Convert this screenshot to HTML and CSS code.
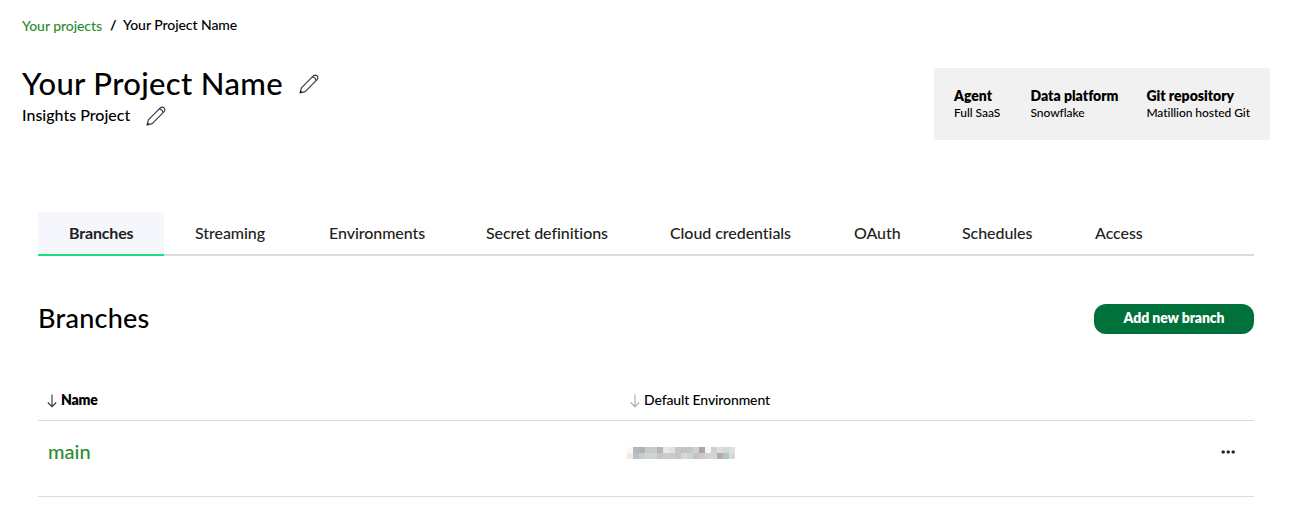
FILE: index.html
```
<!DOCTYPE html>
<html lang="en">
<head>
<meta charset="utf-8">
<title>Your Project Name</title>
<link rel="stylesheet" href="styles.css">
</head>
<body>
<svg class="defs" width="0" height="0" aria-hidden="true">
  <symbol id="pencil" viewBox="0 0 20 20"><path d="M1 19 2.4 13.8 14.3 1.9Q16.2.3 18.1 1.9 19.6 3.8 18.1 5.7L6.2 17.6Z M13.2 3 Q16.6 3.2 17 6.8" fill="none" stroke="#333" stroke-width="1.1" stroke-linejoin="round"/><path d="M1 19l.8-2.6 1.8 1.8z" fill="#222"/></symbol>
  <symbol id="arrow" viewBox="0 0 10 14"><path d="M5 .5V12.7M.8 8.5 5 12.7 9.2 8.5" fill="none" stroke="currentColor" stroke-width="1.1"/></symbol>
</svg>
<nav class="crumbs"><a class="crumb-link" href="#">Your projects</a><span class="slash">/</span><span class="crumb-current">Your Project Name</span></nav>
<header class="header">
  <div>
    <div class="title-row"><h1 class="title">Your Project Name</h1><svg class="pencil"><use href="#pencil"/></svg></div>
    <div class="sub-row"><span class="subtitle">Insights Project</span><svg class="pencil"><use href="#pencil"/></svg></div>
  </div>
  <dl class="info">
    <div class="info-agent"><dt>Agent</dt><dd>Full SaaS</dd></div>
    <div class="info-platform"><dt>Data platform</dt><dd>Snowflake</dd></div>
    <div class="info-git"><dt>Git repository</dt><dd>Matillion hosted Git</dd></div>
  </dl>
</header>
<main class="content">
  <nav class="tabs">
    <a class="tab active">Branches</a><a class="tab">Streaming</a><a class="tab">Environments</a><a class="tab">Secret definitions</a><a class="tab">Cloud credentials</a><a class="tab">OAuth</a><a class="tab">Schedules</a><a class="tab">Access</a>
  </nav>
  <div class="section-head"><h2 class="section-title">Branches</h2><button class="add">Add new branch</button></div>
  <div class="row row-head">
    <div class="cell"><svg class="arrow"><use href="#arrow"/></svg><span class="col-name">Name</span></div>
    <div class="cell"><svg class="arrow muted"><use href="#arrow"/></svg><span class="col-env">Default Environment</span></div>
  </div>
  <div class="row row-body">
    <a class="branch" href="#">main</a>
    <svg class="redacted" viewBox="0 0 18 2" shape-rendering="crispEdges">
      <path fill="#fdf8f2" d="M0 0h1v1H0z"/><path fill="#aeb8c1" d="M1 0h1v1H1z"/><path fill="#b6b1b1" d="M2 0h1v1H2z"/><path fill="#c3cac9" d="M3 0h1v1H3z"/><path fill="#c5ccc6" d="M4 0h1v1H4z"/><path fill="#beb4ab" d="M5 0h1v1H5z"/><path fill="#e6eaee" d="M6 0h1v1H6z"/><path fill="#e5dfda" d="M7 0h1v1H7z"/><path fill="#c2c8c8" d="M8 0h1v1H8z"/><path fill="#bfc4c9" d="M9 0h1v1H9z"/><path fill="#c1c6c6" d="M10 0h1v1h-1z"/><path fill="#ccd4cf" d="M11 0h1v1h-1z"/><path fill="#aaa5a2" d="M12 0h1v1h-1z"/><path fill="#f6f7f8" d="M13 0h1v1h-1z"/><path fill="#cad2d4" d="M14 0h1v1h-1z"/><path fill="#e3deda" d="M15 0h1v1h-1z"/><path fill="#d2dad9" d="M16 0h1v1h-1z"/><path fill="#dde0e0" d="M17 0h1v1h-1z"/>
      <path fill="#f1ebe5" d="M0 1h1v1H0z"/><path fill="#bfbfc3" d="M1 1h1v1H1z"/><path fill="#c3ccd1" d="M2 1h1v1H2z"/><path fill="#cfd5d5" d="M3 1h1v1H3z"/><path fill="#d0d3cc" d="M4 1h1v1H4z"/><path fill="#c5c5c5" d="M5 1h1v1H5z"/><path fill="#cbcbcb" d="M6 1h2v1H6z"/><path fill="#c5c5c5" d="M8 1h1v1H8z"/><path fill="#d5d9dd" d="M9 1h1v1H9z"/><path fill="#ccd3d4" d="M10 1h1v1h-1z"/><path fill="#c4c5b8" d="M11 1h1v1h-1z"/><path fill="#cacacb" d="M12 1h1v1h-1z"/><path fill="#d0d4d6" d="M13 1h1v1h-1z"/><path fill="#d2d5d7" d="M14 1h1v1h-1z"/><path fill="#b5ada2" d="M15 1h1v1h-1z"/><path fill="#b9c2c5" d="M16 1h1v1h-1z"/><path fill="#d5dad9" d="M17 1h1v1h-1z"/>
    </svg>
    <svg class="more" viewBox="0 0 14 4"><rect x=".6" y=".4" width="3.2" height="3.2" rx="1"/><rect x="5.6" y=".4" width="3.2" height="3.2" rx="1"/><rect x="10.6" y=".4" width="3.2" height="3.2" rx="1"/></svg>
  </div>
</main>
</body>
</html>
```
FILE: styles.css
```
* { box-sizing: border-box; }
body { margin: 0; height: 510px; overflow: hidden; background: #fff; color: #000; font-family: Lato, "Liberation Sans", sans-serif; font-weight: 500; font-variant-ligatures: none; }
h1, h2, dl, dd { margin: 0; font-weight: 500; }
a { text-decoration: none; }
.defs { display: none; }
.crumbs { display: flex; height: 68px; padding: 15px 0 0 22px; font-size: 14px; line-height: 20px; letter-spacing: -0.06px; white-space: nowrap; }
.crumb-link { width: 88px; padding-top: 1px; color: #2c8c2c; }
.slash { width: 13px; font-weight: 700; }
.header { display: flex; justify-content: space-between; height: 144px; padding: 0 36px 0 22px; white-space: nowrap; }
.title-row { display: flex; height: 34px; }
.title { width: 277px; font-size: 31px; line-height: 30px; letter-spacing: 0.34px; }
.pencil { width: 20px; height: 20px; margin-top: 6px; }
.sub-row { display: flex; height: 26px; }
.subtitle { width: 124px; font-size: 16px; line-height: 26px; }
.sub-row .pencil { margin-top: 4px; }
.info { display: flex; width: 336px; height: 72px; padding: 19px 20px; background: #f1f1f1; }
.info-agent { width: 76.5px; }
.info-platform { width: 116px; }
.info dt { font-size: 14px; line-height: 17px; font-weight: 800; }
.info dd { font-size: 12px; line-height: 18px; letter-spacing: -0.05px; }
.content { width: 1216px; margin-left: 38px; }
.tabs { display: grid; grid-template-columns: 126px 134px 157px 184px 184px 108px 133px 1fr; height: 44px; border-bottom: 2px solid #dcdcdc; color: #212121; font-size: 16px; line-height: 42px; letter-spacing: -0.06px; white-space: nowrap; }
.tab { height: 44px; padding: 0 31px; }
.tab.active { background: #f5f7fc; border-bottom: 2px solid #19e07e; font-weight: 700; letter-spacing: -0.15px; }
.section-head { display: flex; justify-content: space-between; height: 124px; padding-top: 48px; }
.section-title { font-size: 27px; line-height: 28px; letter-spacing: 0.25px; }
.add { width: 160px; height: 30px; padding: 0 0 2px; border: 0; border-radius: 12px; background: #00713a; color: #fff; font: 800 14px/26px Lato, sans-serif; letter-spacing: -0.1px; }
.row { display: grid; grid-template-columns: 583px 1fr; border-bottom: 1px solid #dcdcdc; }
.row-head { height: 41px; font-size: 14px; line-height: 40px; }
.cell { display: flex; padding-left: 9px; }
.arrow { width: 10px; height: 14px; margin: 14px 4px 0 0; color: #333; }
.muted { color: #aaa; }
.col-name { font-weight: 800; letter-spacing: -0.2px; }
.col-env { letter-spacing: -0.12px; }
.row-body { grid-template-columns: 589px 1fr 33px; height: 76px; }
.branch { padding-left: 10px; color: #2c8c2c; font-size: 20px; line-height: 60px; }
.redacted { width: 108px; height: 12px; margin-top: 26px; }
.more { width: 14px; height: 4px; margin-top: 29px; fill: #222; }
```
